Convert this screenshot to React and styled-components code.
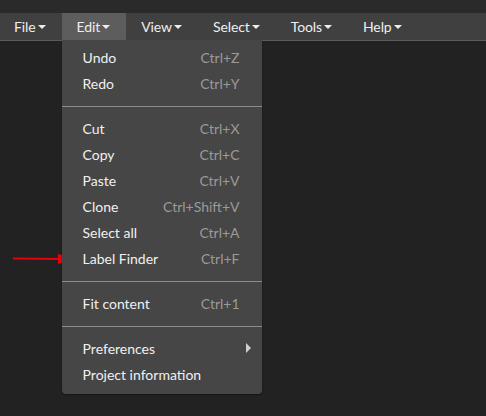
import React from "react";
import styled, { createGlobalStyle } from "styled-components";

const Global = createGlobalStyle`
  html, body { margin: 0; padding: 0; background: #222222; }
  body { font-family: Lato, "Open Sans", sans-serif; width: 486px; height: 416px; overflow: hidden; }
`;

const Page = styled.div`
  position: relative;
  width: 486px;
  height: 416px;
  background: #222222;
`;

const TopStrip = styled.div`
  height: 13px;
  background: #2a2a2a;
`;

const MenuBar = styled.nav`
  display: flex;
  height: 27px;
  background: #404040;
  border-bottom: 1px solid #5c5c5c;
`;

const BarItem = styled.div`
  position: relative;
  display: flex;
  align-items: center;
  padding: 0 16px 0 ${(p) => (p.$first ? 14 : 15)}px;
  background: ${(p) => (p.$open ? "#5d5d5d" : "transparent")};
  color: #eeeeee;
  font-size: 14px;
  letter-spacing: -0.1px;
`;

const Caret = styled.span`
  display: inline-block;
  width: 0;
  height: 0;
  margin-left: 2px;
  margin-top: 1px;
  border-left: 4px solid transparent;
  border-right: 4px solid transparent;
  border-top: 4px solid #eeeeee;
`;

const Dropdown = styled.div`
  position: absolute;
  top: 27px;
  left: 0;
  width: 200px;
  padding: 4px 0 7px;
  background: #464646;
  border-radius: 0 0 4px 4px;
  box-shadow: 0 1px 2px rgba(0, 0, 0, 0.4);
  z-index: 2;
  letter-spacing: 0;
`;

const Row = styled.div`
  display: flex;
  align-items: center;
  justify-content: space-between;
  height: 26px;
  padding: 0 22px 0 21px;
  font-size: 14px;
  color: #f0f0f0;
  white-space: nowrap;
`;

const Shortcut = styled.span`
  color: #9a9a9a;
`;

const SubArrow = styled.span`
  width: 0;
  height: 0;
  margin-right: -11px;
  border-top: 5px solid transparent;
  border-bottom: 5px solid transparent;
  border-left: 5px solid #d0d0d0;
`;

const Separator = styled.div`
  height: 1px;
  margin: 10px 0 8px;
  background: #8c8c8c;
`;

const Annotation = styled.svg`
  position: absolute;
  left: 10px;
  top: 250px;
  pointer-events: none;
`;

const barItems = ["File", "Edit", "View", "Select", "Tools", "Help"];

const groups = [
  [
    ["Undo", "Ctrl+Z"],
    ["Redo", "Ctrl+Y"],
  ],
  [
    ["Cut", "Ctrl+X"],
    ["Copy", "Ctrl+C"],
    ["Paste", "Ctrl+V"],
    ["Clone", "Ctrl+Shift+V"],
    ["Select all", "Ctrl+A"],
    ["Label Finder", "Ctrl+F"],
  ],
  [["Fit content", "Ctrl+1"]],
  [
    ["Preferences", "submenu"],
    ["Project information", ""],
  ],
];

function EditMenu() {
  return (
    <Dropdown>
      {groups.map((g, gi) => (
        <React.Fragment key={gi}>
          {gi > 0 && <Separator />}
          {g.map(([label, sc]) => (
            <Row key={label}>
              <span>{label}</span>
              {sc === "submenu" ? <SubArrow /> : <Shortcut>{sc}</Shortcut>}
            </Row>
          ))}
        </React.Fragment>
      ))}
    </Dropdown>
  );
}

export default function App() {
  return (
    <Page>
      <Global />
      <TopStrip />
      <MenuBar>
        {barItems.map((name, i) => (
          <BarItem key={name} $first={i === 0} $open={name === "Edit"}>
            {name}
            <Caret />
            {name === "Edit" && <EditMenu />}
          </BarItem>
        ))}
      </MenuBar>
      <Annotation width="72" height="18" viewBox="0 0 72 18">
        <line x1="3" y1="8.5" x2="52" y2="9" stroke="#e8000b" strokeWidth="2" />
        <polygon points="48,4 68,9 48,14" fill="#e8000b" />
      </Annotation>
    </Page>
  );
}
